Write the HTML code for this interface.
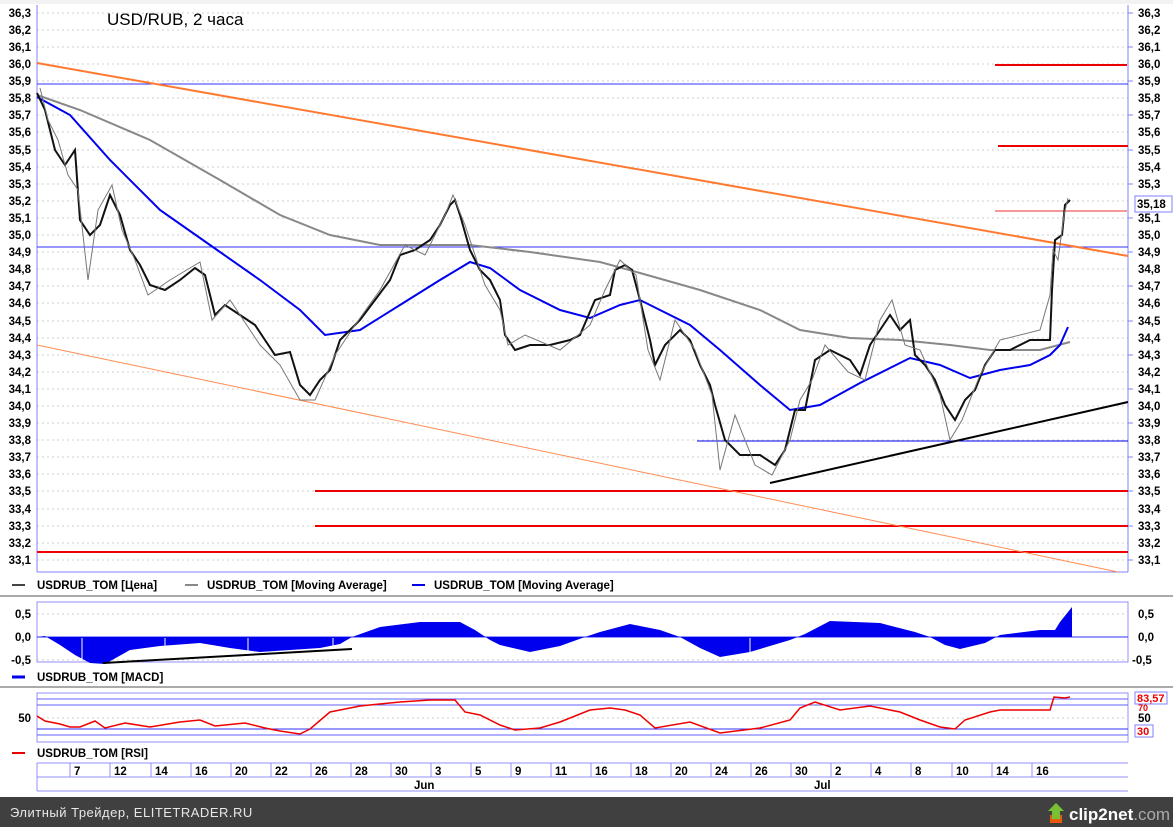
<!DOCTYPE html>
<html><head><meta charset="utf-8"><style>
html,body{margin:0;padding:0;background:#fff;}
svg{display:block;font-family:"Liberation Sans","DejaVu Sans",sans-serif;}
.l{font-size:11.5px;font-weight:bold;fill:#000;}
</style></head><body>
<svg width="1173" height="827" viewBox="0 0 1173 827" xmlns="http://www.w3.org/2000/svg">
<rect x="0" y="0" width="1173" height="827" fill="#fff"/>
<rect x="0" y="0" width="1173" height="4" fill="#f2f2f2"/>
<g stroke="#cfcfcf" stroke-dasharray="2,3" stroke-width="1">
<line x1="37" x2="1128" y1="13" y2="13"/><line x1="37" x2="1128" y1="30" y2="30"/><line x1="37" x2="1128" y1="47" y2="47"/><line x1="37" x2="1128" y1="64" y2="64"/><line x1="37" x2="1128" y1="81" y2="81"/><line x1="37" x2="1128" y1="98" y2="98"/><line x1="37" x2="1128" y1="115" y2="115"/><line x1="37" x2="1128" y1="132" y2="132"/><line x1="37" x2="1128" y1="150" y2="150"/><line x1="37" x2="1128" y1="167" y2="167"/><line x1="37" x2="1128" y1="184" y2="184"/><line x1="37" x2="1128" y1="201" y2="201"/><line x1="37" x2="1128" y1="218" y2="218"/><line x1="37" x2="1128" y1="235" y2="235"/><line x1="37" x2="1128" y1="252" y2="252"/><line x1="37" x2="1128" y1="269" y2="269"/><line x1="37" x2="1128" y1="286" y2="286"/><line x1="37" x2="1128" y1="303" y2="303"/><line x1="37" x2="1128" y1="321" y2="321"/><line x1="37" x2="1128" y1="338" y2="338"/><line x1="37" x2="1128" y1="355" y2="355"/><line x1="37" x2="1128" y1="372" y2="372"/><line x1="37" x2="1128" y1="389" y2="389"/><line x1="37" x2="1128" y1="406" y2="406"/><line x1="37" x2="1128" y1="423" y2="423"/><line x1="37" x2="1128" y1="440" y2="440"/><line x1="37" x2="1128" y1="457" y2="457"/><line x1="37" x2="1128" y1="474" y2="474"/><line x1="37" x2="1128" y1="491" y2="491"/><line x1="37" x2="1128" y1="509" y2="509"/><line x1="37" x2="1128" y1="526" y2="526"/><line x1="37" x2="1128" y1="543" y2="543"/><line x1="37" x2="1128" y1="560" y2="560"/>
</g>
<line x1="37" y1="5" x2="37" y2="572" stroke="#8080ff"/>
<line x1="1128" y1="5" x2="1128" y2="572" stroke="#8080ff"/>
<line x1="37" y1="572" x2="1128" y2="572" stroke="#8080ff"/>
<g stroke="#8080ff"><line x1="1128" x2="1133" y1="13" y2="13"/><line x1="1128" x2="1133" y1="47" y2="47"/><line x1="1128" x2="1133" y1="81" y2="81"/><line x1="1128" x2="1133" y1="115" y2="115"/><line x1="1128" x2="1133" y1="150" y2="150"/><line x1="1128" x2="1133" y1="184" y2="184"/><line x1="1128" x2="1133" y1="218" y2="218"/><line x1="1128" x2="1133" y1="252" y2="252"/><line x1="1128" x2="1133" y1="286" y2="286"/><line x1="1128" x2="1133" y1="321" y2="321"/><line x1="1128" x2="1133" y1="355" y2="355"/><line x1="1128" x2="1133" y1="389" y2="389"/><line x1="1128" x2="1133" y1="423" y2="423"/><line x1="1128" x2="1133" y1="457" y2="457"/><line x1="1128" x2="1133" y1="491" y2="491"/><line x1="1128" x2="1133" y1="526" y2="526"/><line x1="1128" x2="1133" y1="560" y2="560"/></g>
<g class="l" text-anchor="end">
<text x="31" y="17">36,3</text><text x="31" y="34">36,2</text><text x="31" y="51">36,1</text><text x="31" y="68">36,0</text><text x="31" y="85">35,9</text><text x="31" y="102">35,8</text><text x="31" y="119">35,7</text><text x="31" y="136">35,6</text><text x="31" y="154">35,5</text><text x="31" y="171">35,4</text><text x="31" y="188">35,3</text><text x="31" y="205">35,2</text><text x="31" y="222">35,1</text><text x="31" y="239">35,0</text><text x="31" y="256">34,9</text><text x="31" y="273">34,8</text><text x="31" y="290">34,7</text><text x="31" y="307">34,6</text><text x="31" y="325">34,5</text><text x="31" y="342">34,4</text><text x="31" y="359">34,3</text><text x="31" y="376">34,2</text><text x="31" y="393">34,1</text><text x="31" y="410">34,0</text><text x="31" y="427">33,9</text><text x="31" y="444">33,8</text><text x="31" y="461">33,7</text><text x="31" y="478">33,6</text><text x="31" y="495">33,5</text><text x="31" y="513">33,4</text><text x="31" y="530">33,3</text><text x="31" y="547">33,2</text><text x="31" y="564">33,1</text>
</g>
<g class="l">
<text x="1138" y="17">36,3</text><text x="1138" y="34">36,2</text><text x="1138" y="51">36,1</text><text x="1138" y="68">36,0</text><text x="1138" y="85">35,9</text><text x="1138" y="102">35,8</text><text x="1138" y="119">35,7</text><text x="1138" y="136">35,6</text><text x="1138" y="154">35,5</text><text x="1138" y="171">35,4</text><text x="1138" y="188">35,3</text><text x="1138" y="222">35,1</text><text x="1138" y="239">35,0</text><text x="1138" y="256">34,9</text><text x="1138" y="273">34,8</text><text x="1138" y="290">34,7</text><text x="1138" y="307">34,6</text><text x="1138" y="325">34,5</text><text x="1138" y="342">34,4</text><text x="1138" y="359">34,3</text><text x="1138" y="376">34,2</text><text x="1138" y="393">34,1</text><text x="1138" y="410">34,0</text><text x="1138" y="427">33,9</text><text x="1138" y="444">33,8</text><text x="1138" y="461">33,7</text><text x="1138" y="478">33,6</text><text x="1138" y="495">33,5</text><text x="1138" y="513">33,4</text><text x="1138" y="530">33,3</text><text x="1138" y="547">33,2</text><text x="1138" y="564">33,1</text>
</g>
<rect x="1135" y="196" width="37" height="16" fill="#fff" stroke="#8080ff"/>
<text class="l" x="1137" y="208">35,18</text>
<text x="107" y="25" font-size="17" fill="#000">USD/RUB, 2 часа</text>
<line x1="37" y1="84" x2="1128" y2="84" stroke="#3030ff" stroke-width="1"/>
<line x1="37" y1="247" x2="1128" y2="247" stroke="#3030ff" stroke-width="1"/>
<line x1="697" y1="441" x2="1128" y2="441" stroke="#0000ee" stroke-width="1"/>
<line x1="315" y1="491" x2="1128" y2="491" stroke="#ee0000" stroke-width="2"/>
<line x1="315" y1="526" x2="1128" y2="526" stroke="#ee0000" stroke-width="2"/>
<line x1="37" y1="552" x2="1128" y2="552" stroke="#ee0000" stroke-width="2"/>
<line x1="995" y1="65" x2="1127" y2="65" stroke="#ee0000" stroke-width="2"/>
<line x1="998" y1="146" x2="1128" y2="146" stroke="#ee0000" stroke-width="2"/>
<line x1="995" y1="211" x2="1127" y2="211" stroke="#ee3030" stroke-width="1"/>
<line x1="37" y1="63" x2="1128" y2="256" stroke="#ff7a30" stroke-width="2"/>
<line x1="37" y1="345" x2="1118" y2="572" stroke="#ff8c50" stroke-width="1"/>
<line x1="770" y1="483" x2="1128" y2="402" stroke="#000" stroke-width="2"/>
<polyline fill="none" stroke="#888" stroke-width="2" points="37,95 80,110 150,140 220,180 280,215 330,235 380,245 430,245 470,245 530,252 600,262 640,273 700,290 760,310 800,330 850,338 900,340 950,345 990,350 1040,350 1070,342"/>
<polyline fill="none" stroke="#0000ee" stroke-width="2" points="37,97 70,115 110,160 160,210 210,245 260,280 300,310 325,335 360,330 400,305 440,280 470,262 490,268 520,290 560,310 590,318 620,305 640,300 660,310 690,325 720,350 760,385 790,410 820,405 860,383 890,368 910,358 940,365 970,378 1000,370 1030,365 1050,355 1060,345 1068,327"/>
<polyline fill="none" stroke="#111" stroke-width="2" points="37,93 45,110 55,150 65,165 75,150 80,220 90,235 100,225 110,195 120,215 130,250 140,265 150,285 165,290 180,280 195,268 205,275 215,315 225,305 240,315 255,325 265,340 275,355 290,352 300,385 310,395 320,380 330,370 340,340 350,330 360,320 375,300 390,280 400,255 415,250 430,240 440,225 450,205 455,200 460,215 470,250 480,270 490,280 500,300 505,335 515,350 530,345 550,345 570,340 580,335 595,300 610,295 615,270 625,265 632,270 640,300 650,340 655,365 665,345 680,330 690,340 700,365 710,385 715,405 725,440 740,455 760,455 775,465 785,450 795,410 805,410 815,360 830,350 850,360 860,375 870,345 880,330 890,315 900,330 910,320 915,355 925,365 935,380 945,405 955,420 965,400 975,390 985,365 995,350 1010,350 1030,340 1045,340 1050,340 1052,290 1055,240 1062,235 1065,205 1070,200"/>
<polyline fill="none" stroke="#777" stroke-width="1" points="40,88 48,120 58,140 68,175 78,190 88,280 98,210 112,185 122,230 135,260 148,295 170,280 200,262 212,320 230,300 260,345 280,365 300,400 315,400 335,355 355,325 380,290 405,245 425,255 445,215 453,195 465,225 485,285 500,310 508,345 525,335 560,350 590,325 605,290 620,260 636,275 648,350 660,380 675,320 695,350 712,395 720,470 735,415 755,465 772,475 790,440 800,400 812,380 825,345 848,372 865,380 880,320 892,300 905,345 920,350 940,395 950,440 962,420 980,375 1000,340 1040,330 1050,295 1053,250 1058,260 1064,215 1068,198"/>
<line x1="12" y1="585" x2="25" y2="585" stroke="#444" stroke-width="2"/>
<text class="l" x="37" y="589">USDRUB_TOM [Цена]</text>
<line x1="185" y1="585" x2="198" y2="585" stroke="#888" stroke-width="2"/>
<text class="l" x="207" y="589">USDRUB_TOM [Moving Average]</text>
<line x1="412" y1="585" x2="425" y2="585" stroke="#0000ee" stroke-width="2"/>
<text class="l" x="434" y="589">USDRUB_TOM [Moving Average]</text>
<line x1="0" y1="596" x2="1173" y2="596" stroke="#aaa" stroke-width="2"/>
<rect x="37" y="602" width="1091" height="60" fill="none" stroke="#9090ff"/>
<g stroke="#ccc" stroke-dasharray="2,3"><line x1="37" x2="1128" y1="614" y2="614"/><line x1="37" x2="1128" y1="660" y2="660"/></g>
<line x1="37" y1="637" x2="1128" y2="637" stroke="#3030ff"/>
<polygon fill="#0000ee" points="37,637 45,636 60,645 75,655 90,663 105,664 130,650 160,646 200,643 230,648 260,652 290,650 320,648 340,644 352,637 380,627 420,622 460,622 475,630 490,640 500,645 530,652 560,646 585,637 600,632 630,624 660,630 680,637 700,648 720,657 750,652 790,640 805,634 830,621 880,623 915,632 930,637 945,645 960,649 985,643 1000,635 1040,630 1055,630 1060,622 1072,607 1072,637"/>
<g stroke="#fff" stroke-width="1"><line x1="82" y1="638" x2="82" y2="660"/><line x1="165" y1="638" x2="165" y2="660"/><line x1="248" y1="638" x2="248" y2="660"/><line x1="333" y1="638" x2="333" y2="660"/><line x1="750" y1="638" x2="750" y2="660"/></g>
<line x1="103" y1="663" x2="352" y2="649" stroke="#000" stroke-width="2"/>
<g class="l"><text x="31" y="618" text-anchor="end">0,5</text><text x="31" y="641" text-anchor="end">0,0</text><text x="31" y="664" text-anchor="end">-0,5</text>
<text x="1138" y="618">0,5</text><text x="1138" y="641">0,0</text><text x="1132" y="664">-0,5</text></g>
<line x1="12" y1="677" x2="25" y2="677" stroke="#0000ee" stroke-width="3"/>
<text class="l" x="37" y="681">USDRUB_TOM [MACD]</text>
<line x1="0" y1="687" x2="1173" y2="687" stroke="#aaa" stroke-width="2"/>
<rect x="37" y="693" width="1091" height="49" fill="none" stroke="#9090ff"/>
<line x1="37" y1="699" x2="1128" y2="699" stroke="#6060ff"/>
<line x1="37" y1="705" x2="1128" y2="705" stroke="#6060ff"/>
<line x1="37" y1="718" x2="1128" y2="718" stroke="#ccc" stroke-dasharray="2,3"/>
<line x1="37" y1="729" x2="1128" y2="729" stroke="#3030ff"/>
<line x1="37" y1="735" x2="1128" y2="735" stroke="#6060ff"/>
<polyline fill="none" stroke="#ee0000" stroke-width="1.5" points="37,716 45,721 60,724 70,727 80,727 95,721 105,728 125,723 150,727 180,722 200,720 215,726 245,723 265,728 280,731 300,734 310,729 330,712 340,710 360,706 400,702 430,700 455,700 465,712 480,715 500,725 515,730 540,728 560,722 590,710 610,708 625,710 640,715 655,728 690,722 720,733 760,728 790,720 800,708 815,702 840,710 870,706 900,712 920,720 940,727 955,729 965,720 990,712 1000,710 1040,710 1050,710 1054,697 1065,698 1070,697"/>
<text class="l" x="31" y="722" text-anchor="end">50</text>
<rect x="1135" y="692" width="32" height="12" fill="#fff" stroke="#8080ff"/>
<text x="1137" y="702" font-size="11" font-weight="bold" fill="#ee0000">83,57</text>
<text x="1138" y="711" font-size="9" font-weight="bold" fill="#ee0000">70</text>
<text class="l" x="1138" y="722">50</text>
<rect x="1135" y="725" width="18" height="12" fill="#fff" stroke="#8080ff"/>
<text x="1137" y="735" font-size="11" font-weight="bold" fill="#ee0000">30</text>
<line x1="12" y1="753" x2="25" y2="753" stroke="#ee0000" stroke-width="2"/>
<text class="l" x="37" y="757">USDRUB_TOM [RSI]</text>
<g stroke="#9090ff" fill="none">
<line x1="37" y1="763" x2="1128" y2="763"/><line x1="37" y1="777" x2="1128" y2="777"/><line x1="37" y1="791" x2="1128" y2="791"/><line x1="37" y1="763" x2="37" y2="791"/>
</g>
<g stroke="#9090ff">
<line x1="70" y1="763" x2="70" y2="777"/><line x1="110" y1="763" x2="110" y2="777"/><line x1="151" y1="763" x2="151" y2="777"/><line x1="191" y1="763" x2="191" y2="777"/><line x1="231" y1="763" x2="231" y2="777"/><line x1="271" y1="763" x2="271" y2="777"/><line x1="311" y1="763" x2="311" y2="777"/><line x1="351" y1="763" x2="351" y2="777"/><line x1="391" y1="763" x2="391" y2="777"/><line x1="431" y1="763" x2="431" y2="777"/><line x1="471" y1="763" x2="471" y2="777"/><line x1="511" y1="763" x2="511" y2="777"/><line x1="551" y1="763" x2="551" y2="777"/><line x1="591" y1="763" x2="591" y2="777"/><line x1="631" y1="763" x2="631" y2="777"/><line x1="671" y1="763" x2="671" y2="777"/><line x1="711" y1="763" x2="711" y2="777"/><line x1="751" y1="763" x2="751" y2="777"/><line x1="791" y1="763" x2="791" y2="777"/><line x1="831" y1="763" x2="831" y2="777"/><line x1="871" y1="763" x2="871" y2="777"/><line x1="911" y1="763" x2="911" y2="777"/><line x1="952" y1="763" x2="952" y2="777"/><line x1="992" y1="763" x2="992" y2="777"/><line x1="1032" y1="763" x2="1032" y2="777"/>
</g>
<g class="l">
<text x="74" y="775">7</text><text x="114" y="775">12</text><text x="155" y="775">14</text><text x="195" y="775">16</text><text x="235" y="775">20</text><text x="275" y="775">22</text><text x="315" y="775">26</text><text x="355" y="775">28</text><text x="395" y="775">30</text><text x="435" y="775">3</text><text x="475" y="775">5</text><text x="515" y="775">9</text><text x="555" y="775">11</text><text x="595" y="775">16</text><text x="635" y="775">18</text><text x="675" y="775">20</text><text x="715" y="775">24</text><text x="755" y="775">26</text><text x="795" y="775">30</text><text x="835" y="775">2</text><text x="875" y="775">4</text><text x="915" y="775">8</text><text x="956" y="775">10</text><text x="996" y="775">14</text><text x="1036" y="775">16</text>
<text x="414" y="789">Jun</text><text x="814" y="789">Jul</text>
</g>
<rect x="0" y="797" width="1173" height="30" fill="#404040"/>
<text x="10" y="817" font-size="13" fill="#e8e8e8" letter-spacing="0.5">Элитный Трейдер, ELITETRADER.RU</text>
<g transform="translate(1048,803)">
<rect x="2" y="12" width="12" height="8" fill="#e85a10"/>
<polygon points="8,0 16,8 12,8 12,16 4,16 4,8 0,8" fill="#7ac034"/>
</g>
<text x="1069" y="820" font-size="17" font-weight="bold" fill="#fff">clip2net<tspan fill="#aaa" font-weight="normal">.com</tspan></text>
</svg>
</body></html>
